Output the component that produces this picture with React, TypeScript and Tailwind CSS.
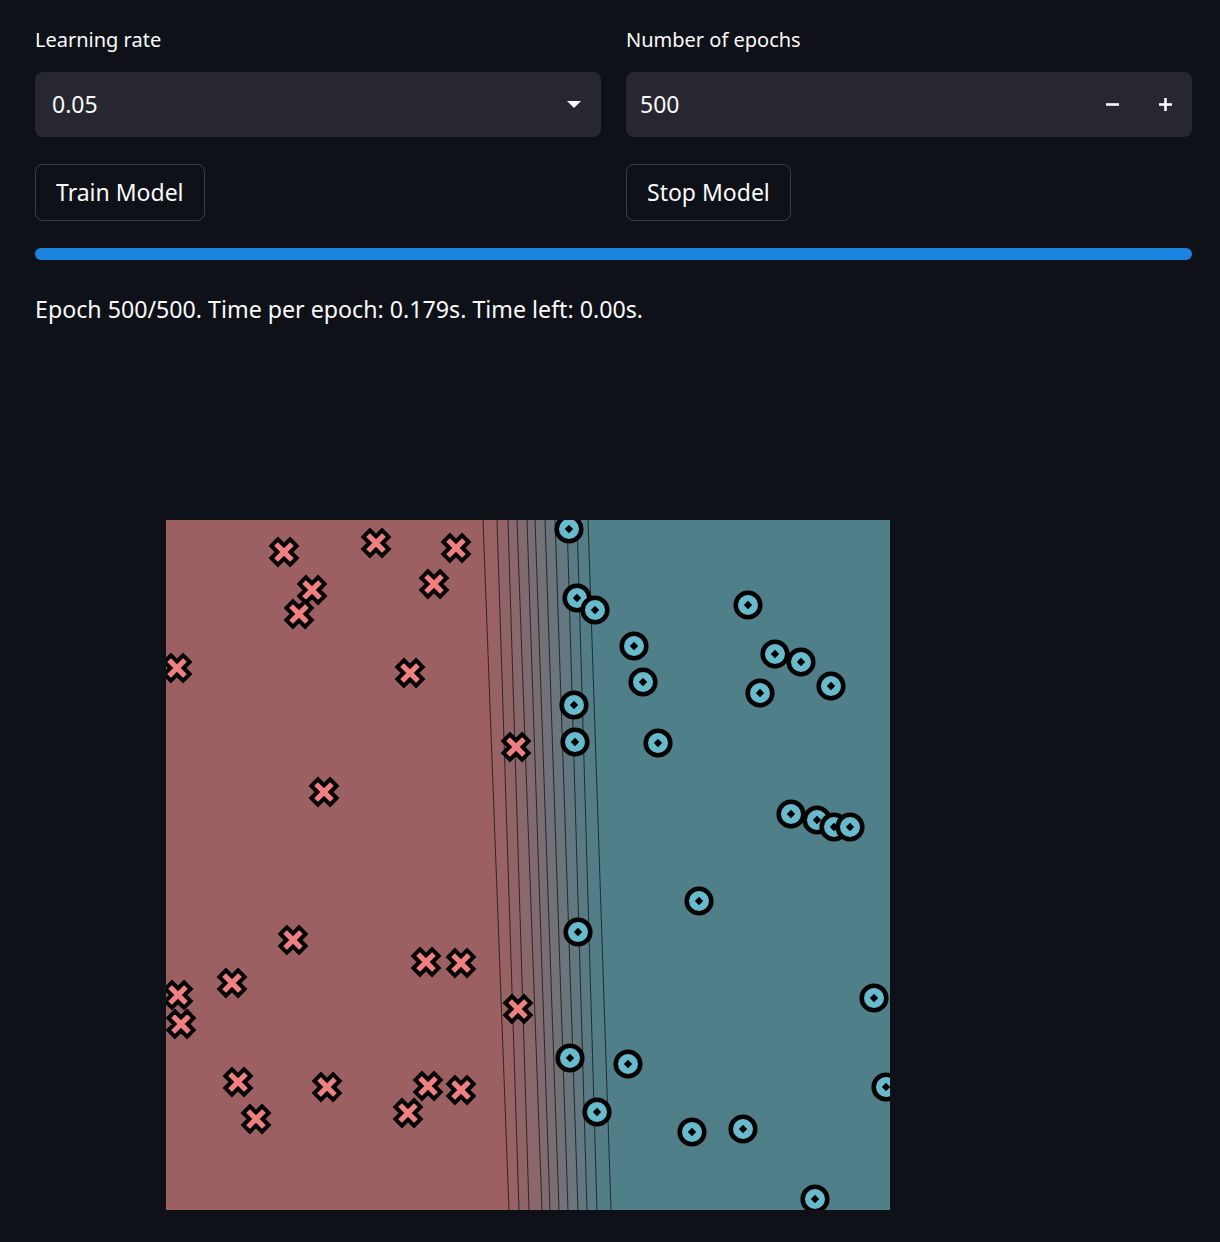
const font = { fontFamily: '"Noto Sans", "Open Sans", sans-serif' };

// contour lines: x at top (y=0) and bottom (y=690) of the plot
const LINES: [number, number][] = [
  [317, 343],
  [331, 353],
  [342, 363],
  [351, 376],
  [361, 384],
  [369, 393],
  [379, 402],
  [389, 412],
  [401, 421],
  [411, 431],
  [422, 445],
];

const RED = [157, 96, 98];
const TEAL = [79, 128, 138];

const mix = (t: number) => {
  const c = RED.map((r, i) => Math.round(r + (TEAL[i] - r) * t));
  return `rgb(${c[0]},${c[1]},${c[2]})`;
};

const CROSSES: [number, number][] = [
  [284, 552], [376, 543], [456, 548], [434, 584], [312, 590], [299, 614],
  [177, 668], [410, 673], [516, 747], [324, 792], [293, 940], [426, 962],
  [461, 963], [232, 983], [178, 995], [181, 1024], [518, 1009], [238, 1082],
  [327, 1087], [428, 1086], [461, 1090], [256, 1119], [408, 1113],
];

const DOTS: [number, number][] = [
  [569, 529], [577, 598], [595, 610], [748, 605], [634, 646], [775, 654],
  [801, 662], [643, 682], [831, 686], [760, 693], [574, 705], [575, 742],
  [658, 743], [791, 814], [817, 820], [834, 827], [850, 827], [699, 901],
  [578, 932], [874, 998], [570, 1058], [628, 1064], [886, 1087], [597, 1112],
  [692, 1132], [743, 1129], [815, 1199],
];

const OX = 166;
const OY = 520;
const W = 724;
const H = 690;

const Cross = ({ x, y }: { x: number; y: number }) => {
  const a = 4.6;
  const s = 13.2;
  const pts = [
    [a, s], [a, a], [s, a], [s, -a], [a, -a], [a, -s],
    [-a, -s], [-a, -a], [-s, -a], [-s, a], [-a, a], [-a, s],
  ]
    .map((p) => p.join(','))
    .join(' ');
  return (
    <polygon
      points={pts}
      transform={`translate(${x} ${y}) rotate(45)`}
      fill="#f08080"
      stroke="#000"
      strokeWidth={4}
      strokeLinejoin="miter"
    />
  );
};

const Dot = ({ x, y }: { x: number; y: number }) => (
  <g transform={`translate(${x} ${y})`}>
    <circle r={12.3} fill="#66bccd" stroke="#000" strokeWidth={4.6} />
    <polygon points="0,-4.2 4.2,0 0,4.2 -4.2,0" fill="#000" />
  </g>
);

const Plot = () => {
  const bands: { pts: string; fill: string }[] = [];
  const n = LINES.length;
  bands.push({
    pts: `0,0 ${LINES[0][0]},0 ${LINES[0][1]},${H} 0,${H}`,
    fill: mix(0),
  });
  for (let i = 0; i < n - 1; i++) {
    const [t0, b0] = LINES[i];
    const [t1, b1] = LINES[i + 1];
    bands.push({
      pts: `${t0},0 ${t1},0 ${b1},${H} ${b0},${H}`,
      fill: mix((i + 0.5) / (n - 1)),
    });
  }
  bands.push({
    pts: `${LINES[n - 1][0]},0 ${W},0 ${W},${H} ${LINES[n - 1][1]},${H}`,
    fill: mix(1),
  });

  return (
    <svg width={W} height={H} viewBox={`0 0 ${W} ${H}`} className="block">
      {bands.map((b, i) => (
        <polygon key={i} points={b.pts} fill={b.fill} stroke={b.fill} strokeWidth={0.6} />
      ))}
      {LINES.map(([t, b], i) => (
        <line key={i} x1={t} y1={0} x2={b} y2={H} stroke="#111" strokeOpacity={0.8} strokeWidth={0.9} />
      ))}
      {CROSSES.map(([x, y], i) => (
        <Cross key={i} x={x - OX} y={y - OY} />
      ))}
      {DOTS.map(([x, y], i) => (
        <Dot key={i} x={x - OX} y={y - OY} />
      ))}
    </svg>
  );
};

export default function App() {
  return (
    <div className="min-h-[1242px] w-[1220px] bg-[#0e1117] text-[#fafafa]" style={font}>
      <div className="pl-[35px] pr-[28px] pt-[25px]">
        <div className="grid grid-cols-2 gap-x-[25px]">
          <div>
            <div className="mb-[18px] h-[29px] text-[20px] leading-[29px]">Learning rate</div>
            <div className="flex h-[65px] items-center justify-between rounded-lg bg-[#262730] pl-[17px] pr-[20px]">
              <span className="text-[23px]">0.05</span>
              <svg width="14" height="8" viewBox="0 0 14 8">
                <polygon points="0,0 14,0 7,7" fill="#fafafa" />
              </svg>
            </div>
            <button className="mt-[27px] h-[57px] rounded-lg border border-[#3c3e47] px-[20px] text-[23px]">
              Train Model
            </button>
          </div>
          <div>
            <div className="mb-[18px] h-[29px] text-[20px] leading-[29px]">Number of epochs</div>
            <div className="flex h-[65px] items-center rounded-lg bg-[#262730] pl-[14px]">
              <span className="flex-1 text-[23px]">500</span>
              <div className="flex items-center gap-[40px] pr-[20px]">
                <svg width="13" height="13" viewBox="0 0 13 13">
                  <rect x="0" y="5.2" width="13" height="2.6" fill="#fafafa" />
                </svg>
                <svg width="13" height="13" viewBox="0 0 13 13">
                  <rect x="0" y="5.2" width="13" height="2.6" fill="#fafafa" />
                  <rect x="5.2" y="0" width="2.6" height="13" fill="#fafafa" />
                </svg>
              </div>
            </div>
            <button className="mt-[27px] h-[57px] rounded-lg border border-[#3c3e47] px-[20px] text-[23px]">
              Stop Model
            </button>
          </div>
        </div>
        <div className="mt-[27px] h-[12px] rounded-full bg-[#1c83e1]" />
        <p className="mt-[31px] text-[23.2px] leading-[36px]">
          Epoch 500/500. Time per epoch: 0.179s. Time left: 0.00s.
        </p>
        <div className="pl-[131px] pt-[193px]">
          <Plot />
        </div>
      </div>
    </div>
  );
}
